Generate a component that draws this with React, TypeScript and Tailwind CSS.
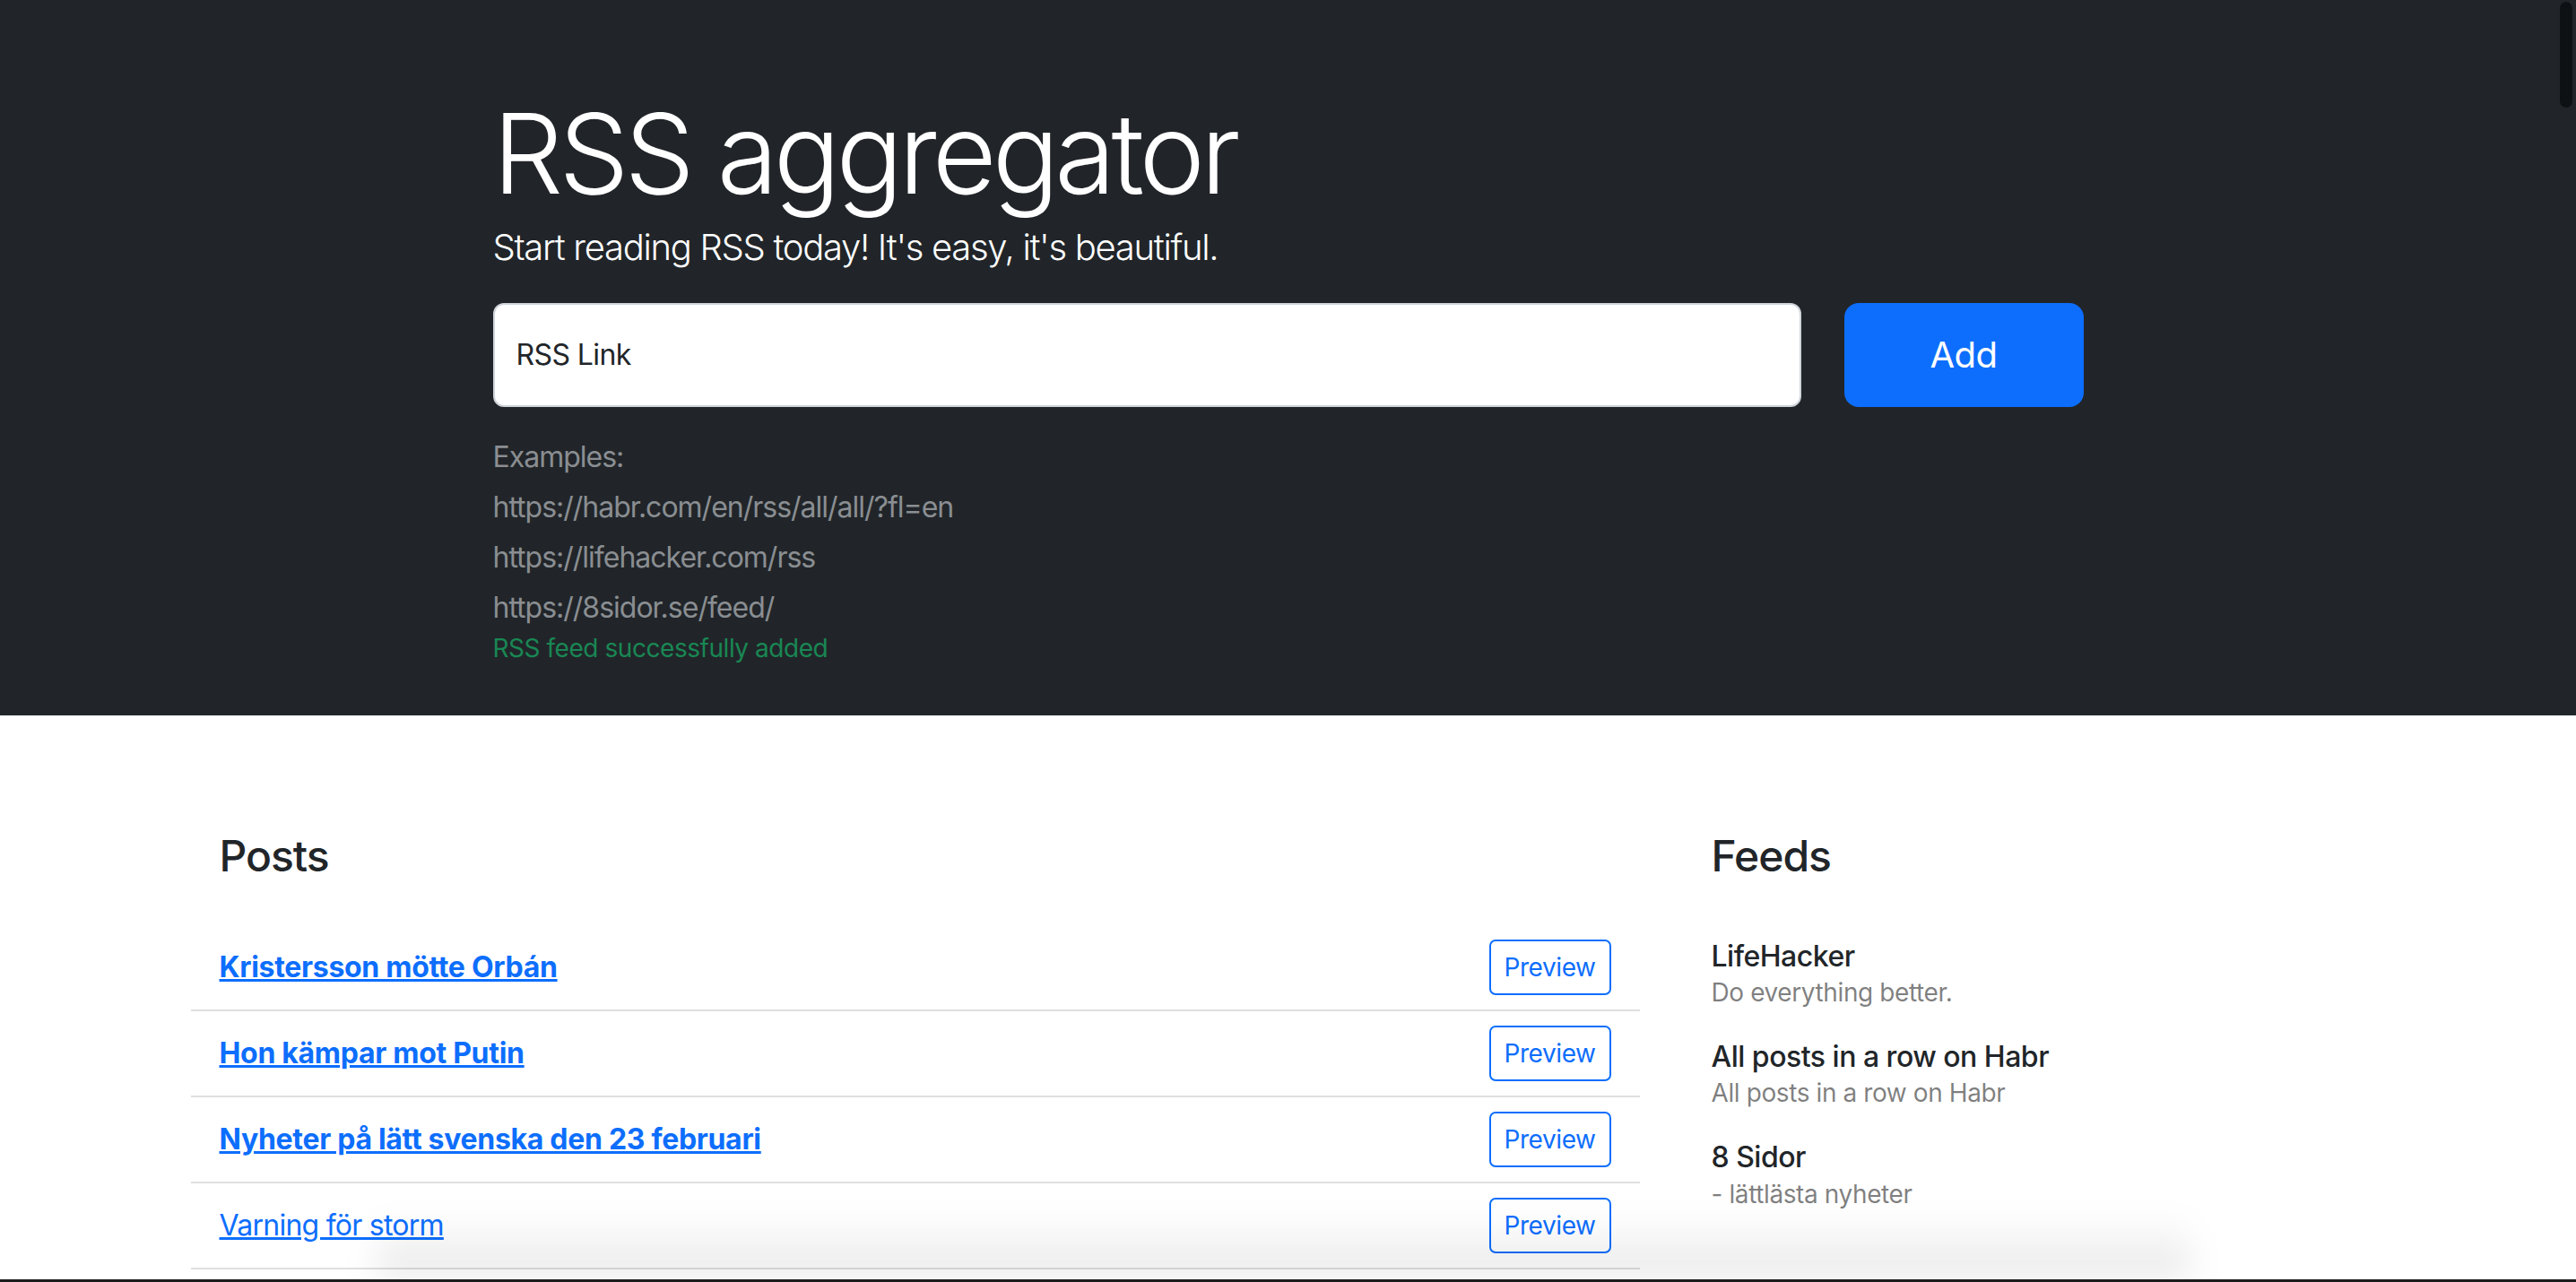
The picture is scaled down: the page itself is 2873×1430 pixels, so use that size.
const examples = [
  "https://habr.com/en/rss/all/all/?fl=en",
  "https://lifehacker.com/rss",
  "https://8sidor.se/feed/",
];

const posts = [
  { title: "Kristersson mötte Orbán", read: false },
  { title: "Hon kämpar mot Putin", read: false },
  { title: "Nyheter på lätt svenska den 23 februari", read: false },
  { title: "Varning för storm", read: true },
];

const feeds = [
  { title: "LifeHacker", description: "Do everything better." },
  { title: "All posts in a row on Habr", description: "All posts in a row on Habr" },
  { title: "8 Sidor", description: "- lättlästa nyheter" },
];

export default function App() {
  return (
    <div className="relative h-[1430px] overflow-hidden bg-white font-['Inter','Noto_Sans',sans-serif] text-[#212529]">
      <section className="bg-[#212529] px-[96px] py-[96px]">
        <div className="mx-auto w-[1774px] text-white">
          <h1 className="text-[124px] font-light leading-[150px] tracking-[-5px]">RSS aggregator</h1>
          <p className="mb-[32px] text-[40px] font-light leading-[60px] tracking-[-1.3px]">
            Start reading RSS today! It's easy, it's beautiful.
          </p>
          <form className="flex gap-[48px]" onSubmit={(e) => e.preventDefault()}>
            <div className="relative flex-1">
              <input
                id="url-input"
                aria-label="url"
                autoComplete="off"
                className="h-[116px] w-full rounded-[12px] border-2 border-[#ced4da] bg-white px-[24px] text-[32px] text-[#212529] outline-none"
              />
              <label
                htmlFor="url-input"
                className="pointer-events-none absolute left-[26px] top-[34px] text-[32px] leading-[48px] tracking-[-0.6px] text-[#212529]"
              >
                RSS Link
              </label>
            </div>
            <button
              type="submit"
              className="h-[116px] w-[267px] rounded-[16px] bg-[#0d6efd] text-[40px] leading-[60px] tracking-[-0.5px] text-white"
            >
              Add
            </button>
          </form>
          <div className="relative mt-[32px] flex flex-col gap-[8px] text-[32px] leading-[48px] tracking-[-1px] text-[#8a8e92]">
            <p>Examples:</p>
            {examples.map((url) => (
              <p key={url}>{url}</p>
            ))}
            <p className="absolute left-0 top-full text-[28px] leading-[42px] tracking-[-0.45px] text-[#198754]">
              RSS feed successfully added
            </p>
          </div>
        </div>
      </section>

      <section className="mx-auto w-[2640px] px-[96px] pt-[96px]">
        <div className="flex gap-[48px]">
          <div className="w-[1616px]">
            <div className="p-[32px]">
              <h2 className="mb-[16px] text-[48px] font-medium leading-[57.6px] tracking-[-1px]">Posts</h2>
            </div>
            <ul>
              {posts.map((p) => (
                <li
                  key={p.title}
                  className="flex items-center justify-between border-b-2 border-[#dfdfdf] px-[32px] py-[16px]"
                >
                  <a
                    href="#"
                    className={`text-[32px] leading-[48px] text-[#0d6efd] underline ${
                      p.read ? "font-normal tracking-[-0.75px]" : "font-bold tracking-[-0.3px]"
                    }`}
                  >
                    {p.title}
                  </a>
                  <button
                    type="button"
                    className="h-[62px] w-[136px] rounded-[7px] border-2 border-[#0d6efd] text-[28px] leading-[42px] tracking-[-0.4px] text-[#0d6efd]"
                  >
                    Preview
                  </button>
                </li>
              ))}
            </ul>
          </div>

          <div className="flex-1">
            <div className="p-[32px]">
              <h2 className="mb-[16px] text-[48px] font-medium leading-[57.6px] tracking-[-1px]">Feeds</h2>
            </div>
            <ul>
              {feeds.map((f) => (
                <li key={f.title} className="px-[32px] py-[16px]">
                  <h3 className="text-[32px] font-medium leading-[38.4px] tracking-[-0.5px]">{f.title}</h3>
                  <p className="text-[28px] leading-[42px] tracking-[-0.4px] text-black/50">{f.description}</p>
                </li>
              ))}
            </ul>
          </div>
        </div>
      </section>

      {/* overlay scrollbar thumb */}
      <div className="absolute right-[4px] top-[2px] h-[118px] w-[14px] rounded-full bg-[#0e1114]" />
      {/* window shadow at the bottom edge */}
      <div className="pointer-events-none absolute bottom-[3px] left-[420px] right-[430px] h-[70px] bg-gradient-to-b from-transparent to-black/10 blur-[18px]" />
      <div className="absolute inset-x-0 bottom-0 h-[3px] bg-[#1c1c1c]" />
    </div>
  );
}
